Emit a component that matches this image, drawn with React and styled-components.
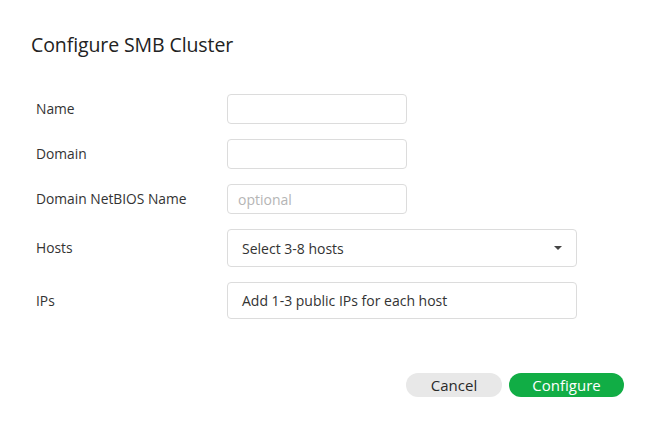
import React from 'react';
import styled, { createGlobalStyle } from 'styled-components';

const GlobalStyle = createGlobalStyle`
  html, body {
    margin: 0;
    padding: 0;
    background: #ffffff;
  }
  body {
    font-family: 'Open Sans', 'Liberation Sans', sans-serif;
    color: #333333;
  }
`;

const Dialog = styled.div`
  width: 660px;
  height: 435px;
  box-sizing: border-box;
  padding: 31px 36px 0 31px;
  display: flex;
  flex-direction: column;
`;

const Title = styled.h1`
  margin: 0;
  font-family: 'Open Sans', 'Liberation Sans', sans-serif;
  font-size: 19.5px;
  font-weight: 400;
  line-height: 28px;
  color: #222222;
  letter-spacing: -0.1px;
`;

const Form = styled.div`
  margin-top: 35px;
  padding-left: 5px;
  display: grid;
  grid-template-columns: 191px 1fr;
  row-gap: 15px;
  align-items: center;
`;

const Label = styled.label`
  font-size: 13.8px;
  color: #333333;
  line-height: 18px;
`;

const Input = styled.div`
  box-sizing: border-box;
  width: ${({ wide }) => (wide ? '350px' : '180px')};
  height: ${({ h }) => h}px;
  border: 1px solid #dcdcdc;
  border-radius: 4px;
  display: flex;
  align-items: center;
  justify-content: space-between;
  padding: 0 ${({ wide }) => (wide ? '14px' : '10px')};
  font-size: 14px;
  color: ${({ placeholder }) => (placeholder ? '#b5b5b5' : '#333333')};
`;

const Caret = styled.span`
  width: 0;
  height: 0;
  border-left: 4px solid transparent;
  border-right: 4px solid transparent;
  border-top: 4px solid #444444;
`;

const Actions = styled.div`
  margin-top: 54px;
  display: flex;
  justify-content: flex-end;
  gap: 7px;
`;

const Button = styled.button`
  height: 24px;
  border: none;
  border-radius: 12px;
  padding: 0;
  width: ${({ primary }) => (primary ? '115px' : '96px')};
  background: ${({ primary }) => (primary ? '#11ad45' : '#e8e8e8')};
  color: ${({ primary }) => (primary ? '#ffffff' : '#2a2a2a')};
  font-family: 'Open Sans', 'Liberation Sans', sans-serif;
  font-size: 15px;
  line-height: 24px;
  cursor: pointer;
`;

export default function App() {
  return (
    <>
      <GlobalStyle />
      <Dialog>
        <Title>Configure SMB Cluster</Title>
        <Form>
          <Label>Name</Label>
          <Input h={30} />
          <Label>Domain</Label>
          <Input h={30} />
          <Label>Domain NetBIOS Name</Label>
          <Input h={30} placeholder>optional</Input>
          <Label>Hosts</Label>
          <Input h={38} wide>
            <span>Select 3-8 hosts</span>
            <Caret />
          </Input>
          <Label>IPs</Label>
          <Input h={37} wide>
            <span>Add 1-3 public IPs for each host</span>
          </Input>
        </Form>
        <Actions>
          <Button>Cancel</Button>
          <Button primary>Configure</Button>
        </Actions>
      </Dialog>
    </>
  );
}
